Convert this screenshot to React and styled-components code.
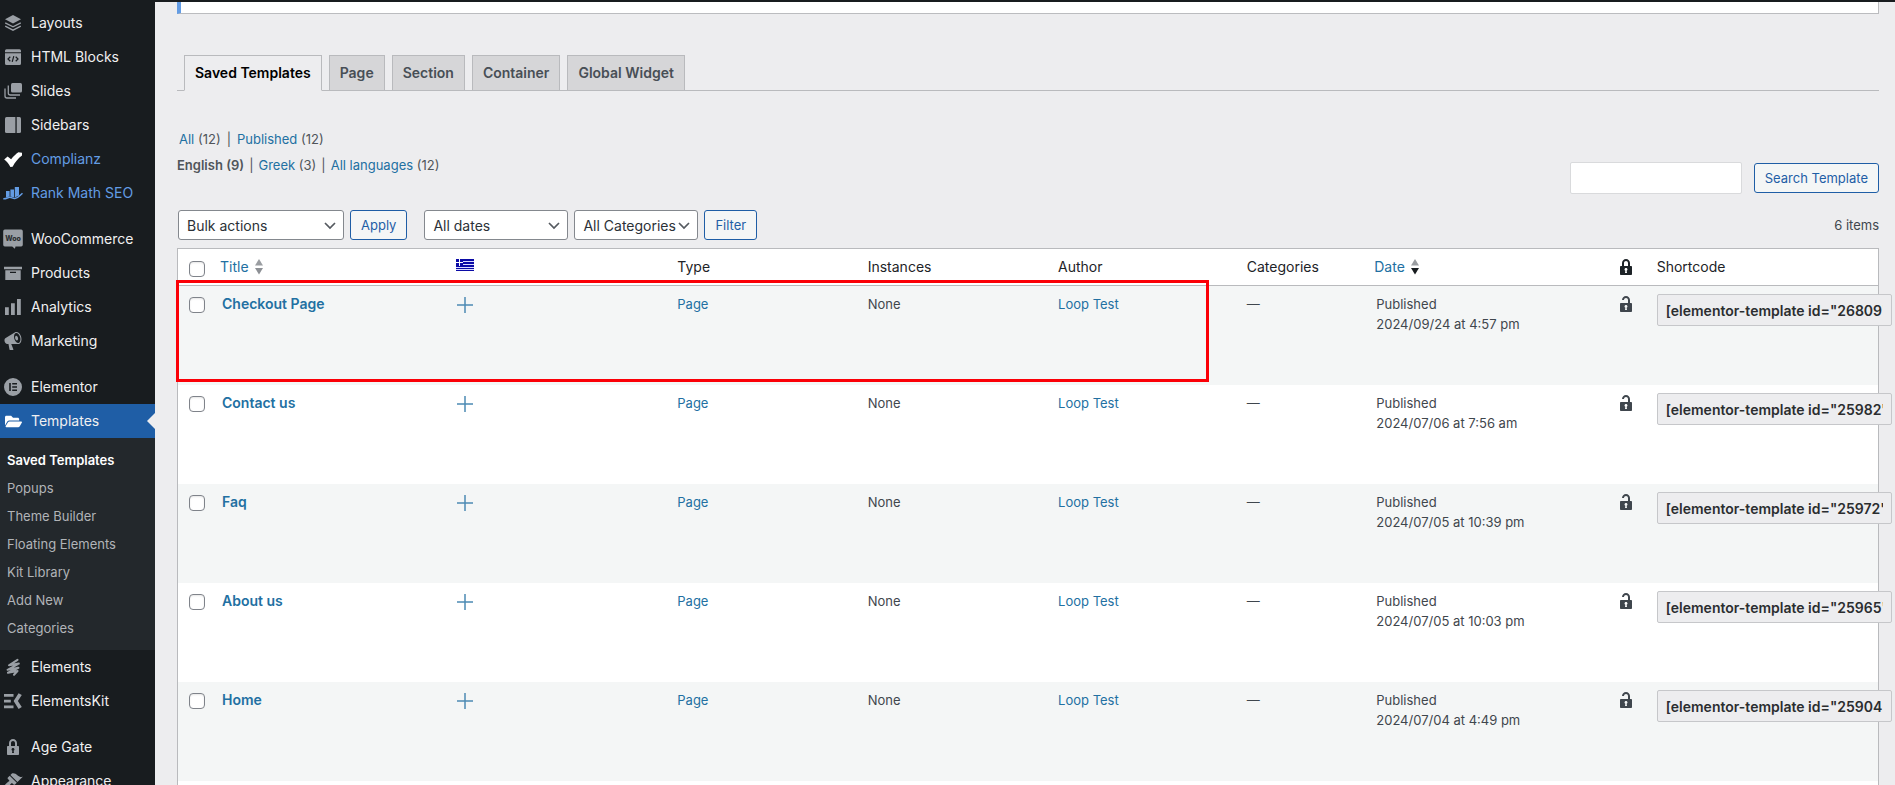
import { useState } from "react";
import styled, { createGlobalStyle } from "styled-components";
import { FaFolderOpen } from "react-icons/fa";

const LOCK_HOLE =
  "m-1 7l-.36-2.15c.51-.24.86-.75.86-1.35 0-.83-.67-1.5-1.5-1.5s-1.5.67-1.5 1.5c0 .6.35 1.11.86 1.35L9 16h2z";

const icons = {
  layouts: (
    <>
      <path d="M10 2l8 4.2-8 4.3-8-4.3z" />
      <path d="M2.2 9.8l7.8 4 7.8-4M2.2 13.2l7.8 4 7.8-4" fill="none" stroke="currentColor" strokeWidth="1.4" />
    </>
  ),
  html: (
    <>
      <path d="M3.5 2.3h13A1.5 1.5 0 0 1 18 3.8v1.4H2V3.8a1.5 1.5 0 0 1 1.5-1.5zM2 6.3h16v10.2a1.5 1.5 0 0 1-1.5 1.5h-13A1.5 1.5 0 0 1 2 16.5z" />
      <path d="M7.3 9.8L5 12l2.3 2.2M12.7 9.8L15 12l-2.3 2.2M10.8 9.2l-1.6 5.6" fill="none" stroke="#181c1f" strokeWidth="1.2" />
    </>
  ),
  slides: (
    <>
      <rect x="8" y="2" width="11" height="9.5" rx="1.5" />
      <path d="M5.3 4.5V12a2 2 0 0 0 2 2H17M2 7.5V15a2 2 0 0 0 2 2h9" fill="none" stroke="currentColor" strokeWidth="1.3" />
    </>
  ),
  sidebars: (
    <>
      <path d="M3.5 2h8.9v16H3.5A1.5 1.5 0 0 1 2 16.5v-13A1.5 1.5 0 0 1 3.5 2z" />
      <path d="M13.7 2h2.8A1.5 1.5 0 0 1 18 3.5v13a1.5 1.5 0 0 1-1.5 1.5h-2.8z" />
    </>
  ),
  complianz: <path d="M1.2 10.6L4.6 7.4l3.5 2.9C10.6 7 13 4.8 15.4 3.2L19 3.8v2.7c-4 3-6.7 6.3-9.4 11.2l-2.2.3c-1.6-3-3.6-5.4-6.2-7.4z" />,
  rankmath: (
    <>
      <path d="M3 8h3.6v5.4L3 14.5zM7.4 6.500H11v8l-3.6-1zM11.8 4H16v8.5l-4.2 2z" />
      <path d="M.3 15.8c3 .3 4.5-1.5 6.5-1.5s3 1.5 5 1.2c2.6-.3 4.5-2.3 7.7-5.3" fill="none" stroke="currentColor" strokeWidth="1.5" />
    </>
  ),
  woo: (
    <>
      <path d="M2 .5h16A1.700 1.700 0 0 1 19.8 2.2v13.6a1.7 1.7 0 0 1-1.8 1.7h-5.5l-.6 2.3-2.7-2.3H2A1.7 1.7 0 0 1 .2 15.8V2.2A1.7 1.7 0 0 1 2 .5z" />
      <text x="10" y="12" textAnchor="middle" fontSize="7" fontWeight="800" fill="#2a2e31">Woo</text>
    </>
  ),
  products: <path d="M1 3.8h18v2.4H1zM2.3 7.3h15.4V17H2.3zM7 8.8v1.3h6V8.8z" fillRule="evenodd" />,
  analytics: <path d="M2 10.3h3.8V18H2zM8 6.3h3.8V18H8zM14 2h3.8v16H14z" />,
  marketing: (
    <path d="M18.15 5.94c.46 1.62.38 3.22-.02 4.48-.42 1.28-1.26 2.18-2.3 2.48-.16.06-.26.06-.4.06-.06.02-.12.02-.18.02-.06.02-.14.02-.22.02h-6.8l2.22 5.5c.02.14-.06.26-.14.34-.08.1-.24.16-.34.16H6.95c-.1 0-.26-.06-.34-.16-.08-.08-.16-.2-.14-.34l-1-5.5H4.25l-.02-.02c-.5.06-1.08-.18-1.54-.62s-.88-1.08-1.06-1.88c-.24-.8-.2-1.56-.02-2.2.18-.62.58-1.08 1.06-1.3l.02-.02 9-5.4c.1-.06.18-.1.24-.16.06-.04.14-.08.24-.12.16-.08.28-.12.5-.18 1.04-.3 2.24.1 3.22.98s1.84 2.24 2.26 3.86zm-2.58 5.98h-.02c.4-.1.74-.34 1.04-.7.58-.7.86-1.76.86-3.04 0-.64-.1-1.3-.28-1.98-.34-1.36-1.02-2.5-1.78-3.24s-1.68-1.1-2.46-.88c-.82.22-1.4.96-1.7 2-.32 1.04-.28 2.36.06 3.72.38 1.36 1 2.5 1.8 3.24.78.74 1.62 1.1 2.48.88zm-2.54-7.08c.22-.04.42-.02.62.04.38.16.76.48 1.02 1s.42 1.2.42 1.78c0 .3-.04.56-.12.8-.18.48-.44.84-.86.94-.34.1-.8-.06-1.14-.4s-.64-.86-.78-1.5c-.18-.62-.12-1.24.02-1.72s.48-.84.82-.94z" />
  ),
  elementor: (
    <path d="M10 1a9 9 0 1 0 0 18 9 9 0 0 0 0-18zM6.2 6h1.6v8H6.2zM9.2 6h4.8v1.6H9.2zM9.2 9.2h4.8v1.6H9.2zM9.2 12.4h4.8V14H9.2z" fillRule="evenodd" />
  ),
  elements: (
    <path d="M14.5 2.8L6 8.3l9.8-1.7L4.6 12.8l10.8-2L5 15.8l9.5-1.8-3.5 3.8" fill="none" stroke="currentColor" strokeWidth="2.1" strokeLinecap="round" strokeLinejoin="round" />
  ),
  elementskit: (
    <path d="M1 3h9.5v2.7H1zM1 8.7h6.8v2.7H1zM1 14.6h9.5v2.7H1zM15.6 2.2l3.2 1.9-3.9 6 3.9 6-3.2 1.9-5-7.9z" />
  ),
  lock: (
    <path d={"M14 9h1c.55 0 1 .45 1 1v7c0 .55-.45 1-1 1H5c-.55 0-1-.45-1-1v-7c0-.55.45-1 1-1h1V6c0-2.21 1.79-4 4-4s4 1.79 4 4v3zm-2 0V6c0-1.1-.9-2-2-2s-2 .9-2 2v3h4z" + LOCK_HOLE} />
  ),
  unlock: (
    <path d={"M12 9V6c0-1.1-.9-2-2-2s-2 .9-2 2H6c0-2.21 1.79-4 4-4s4 1.79 4 4v3h1c.55 0 1 .45 1 1v7c0 .55-.45 1-1 1H5c-.55 0-1-.45-1-1v-7c0-.55.45-1 1-1h7z" + LOCK_HOLE} />
  ),
  appearance: (
    <path d="M14.48 11.06L7.41 3.99l1.5-1.5c.5-.56 2.3-.47 3.51.32 1.21.8 1.43 1.28 2.91 2.1 1.18.64 2.45 1.26 4.45.85zm-.71.71L6.7 4.7 4.93 6.47c-.39.39-.39 1.02 0 1.41l1.06 1.06c.39.39.39 1.03 0 1.42-.6.6-1.43 1.11-2.21 1.69-.35.26-.7.53-1.01.84C1.43 14.23.4 16.08 1.4 17.07c.99 1 2.84-.03 4.18-1.36.31-.31.58-.66.85-1.02.57-.78 1.08-1.61 1.69-2.21.39-.39 1.02-.39 1.41 0l1.06 1.06c.39.39 1.02.39 1.41 0z" />
  ),
};

const Icon = ({ name }) => (
  <Glyph viewBox="0 0 20 20" aria-hidden="true">
    {icons[name]}
  </Glyph>
);

const menu = [
  [
    { label: "Layouts", icon: "layouts" },
    { label: "HTML Blocks", icon: "html" },
    { label: "Slides", icon: "slides" },
    { label: "Sidebars", icon: "sidebars" },
    { label: "Complianz", icon: "complianz", color: "#639ce4", iconColor: "#ffffff" },
    { label: "Rank Math SEO", icon: "rankmath", color: "#639ce4", iconColor: "#639ce4" },
  ],
  [
    { label: "WooCommerce", icon: "woo" },
    { label: "Products", icon: "products" },
    { label: "Analytics", icon: "analytics" },
    { label: "Marketing", icon: "marketing" },
  ],
  [
    { label: "Elementor", icon: "elementor" },
    {
      label: "Templates",
      icon: "templates",
      iconColor: "#ffffff",
      children: [
        "Saved Templates",
        "Popups",
        "Theme Builder",
        "Floating Elements",
        "Kit Library",
        "Add New",
        "Categories",
      ],
    },
    { label: "Elements", icon: "elements" },
    { label: "ElementsKit", icon: "elementskit" },
  ],
  [
    { label: "Age Gate", icon: "lock" },
    { label: "Appearance", icon: "appearance" },
  ],
];

const tabs = ["Saved Templates", "Page", "Section", "Container", "Global Widget"];

const templates = [
  { id: 26809, title: "Checkout Page", date: "2024/09/24 at 4:57 pm" },
  { id: 25982, title: "Contact us", date: "2024/07/06 at 7:56 am" },
  { id: 25972, title: "Faq", date: "2024/07/05 at 10:39 pm" },
  { id: 25965, title: "About us", date: "2024/07/05 at 10:03 pm" },
  { id: 25904, title: "Home", date: "2024/07/04 at 4:49 pm" },
];

function Sidebar() {
  return (
    <SideNav>
      {menu.map((group, index) => (
        <MenuGroup key={index}>
          {group.map((item) => (
            <li key={item.label}>
              <MenuLink href="#" $color={item.color} $iconColor={item.iconColor} $active={!!item.children}>
                {item.icon === "templates" ? (
                  <FolderBox>
                    <FaFolderOpen size={17} />
                  </FolderBox>
                ) : (
                  <Icon name={item.icon} />
                )}
                {item.label}
              </MenuLink>
              {item.children && (
                <SubMenu>
                  {item.children.map((child, i) => (
                    <li key={child}>
                      <SubLink href="#" $current={i === 0}>
                        {child}
                      </SubLink>
                    </li>
                  ))}
                </SubMenu>
              )}
            </li>
          ))}
        </MenuGroup>
      ))}
    </SideNav>
  );
}

function SortArrows({ desc }) {
  return (
    <Arrows viewBox="0 0 8 16" aria-hidden="true">
      <path d="M4 0l4 6.5H0z" fill="#9a9da1" />
      <path d="M4 15.5L0 9h8z" fill={desc ? "#181c1f" : "#8d9095"} />
    </Arrows>
  );
}

function GreekFlag() {
  return (
    <Flag viewBox="0 0 18 12" role="img" aria-label="Greek">
      <rect width="18" height="12" fill="#0b0ba6" />
      <path d="M7 2h11v1H7zM7 5h11v1H7zM0 8h18v1H0zM0 10h18v1H0z" fill="#dcdcff" />
      <path d="M3 0h1v7H3zM0 3h7v1H0z" fill="#ffffff" />
    </Flag>
  );
}

function TemplateTable() {
  const [selected, setSelected] = useState([]);

  const toggle = (id) => {
    setSelected(selected.includes(id) ? selected.filter((s) => s !== id) : [...selected, id]);
  };

  const toggleAll = (e) => {
    setSelected(e.target.checked ? templates.map((t) => t.id) : []);
  };

  return (
    <TableArea>
      <Table>
        <colgroup>
          <Col $width="32px" />
          <Col $width="13.9%" />
          <Col $width="13%" />
          <Col $width="11.2%" />
          <Col $width="11.2%" />
          <Col $width="11.1%" />
          <Col $width="7.5%" />
          <Col $width="14.2%" />
          <Col $width="41px" />
          <Col />
        </colgroup>
        <thead>
          <tr>
            <HeadCell $tight>
              <Checkbox
                aria-label="Select all"
                checked={selected.length === templates.length}
                onChange={toggleAll}
              />
            </HeadCell>
            <HeadCell>
              <SortLink href="#">
                Title <SortArrows />
              </SortLink>
            </HeadCell>
            <HeadCell>
              <GreekFlag />
            </HeadCell>
            <HeadCell>Type</HeadCell>
            <HeadCell>Instances</HeadCell>
            <HeadCell>Author</HeadCell>
            <HeadCell>Categories</HeadCell>
            <HeadCell>
              <SortLink href="#">
                Date <SortArrows desc />
              </SortLink>
            </HeadCell>
            <HeadCell>
              <Icon name="lock" />
            </HeadCell>
            <HeadCell>Shortcode</HeadCell>
          </tr>
        </thead>
        <tbody>
          {templates.map((item) => (
            <Row key={item.id}>
              <Cell $tight>
                <Checkbox
                  aria-label={"Select " + item.title}
                  checked={selected.includes(item.id)}
                  onChange={() => toggle(item.id)}
                />
              </Cell>
              <SortedCell>
                <TitleLink href="#">{item.title}</TitleLink>
              </SortedCell>
              <Cell>
                <AddLink href="#" aria-label="Add translation">
                  <svg width="18" height="20" viewBox="0 0 18 20">
                    <path d="M9 3v16M1 11h16" stroke="#4c8bb4" strokeWidth="1.5" />
                  </svg>
                </AddLink>
              </Cell>
              <Cell>
                <Link href="#">Page</Link>
              </Cell>
              <Cell>None</Cell>
              <Cell>
                <Link href="#">Loop Test</Link>
              </Cell>
              <Cell>—</Cell>
              <SortedCell>
                Published
                <br />
                {item.date}
              </SortedCell>
              <Cell>
                <Icon name="unlock" />
              </Cell>
              <Cell>
                <Shortcode
                  readOnly
                  aria-label={"Shortcode for " + item.title}
                  value={`[elementor-template id="${item.id}"]`}
                />
              </Cell>
            </Row>
          ))}
          <Row>
            <Cell colSpan={10} />
          </Row>
        </tbody>
      </Table>
      <Highlight />
    </TableArea>
  );
}

function App() {
  return (
    <Page>
      <GlobalStyle />
      <Sidebar />
      <Content>
        <Notice />
        <Tabs>
          {tabs.map((tab, i) => (
            <Tab key={tab} href="#" $active={i === 0}>
              {tab}
            </Tab>
          ))}
        </Tabs>
        <Filters>
          <Views>
            <ViewLine $indent>
              <span>
                <Link href="#">All</Link> (12)
              </span>
              <span>|</span>
              <span>
                <Link href="#">Published</Link> (12)
              </span>
            </ViewLine>
            <ViewLine>
              <strong>English (9)</strong>
              <span>|</span>
              <span>
                <Link href="#">Greek</Link> (3)
              </span>
              <span>|</span>
              <span>
                <Link href="#">All languages</Link> (12)
              </span>
            </ViewLine>
          </Views>
          <SearchBox onSubmit={(e) => e.preventDefault()}>
            <SearchInput type="search" aria-label="Search Template" />
            <Button type="submit">Search Template</Button>
          </SearchBox>
        </Filters>
        <TableNav>
          <Select $width="166px" aria-label="Bulk actions">
            <option>Bulk actions</option>
          </Select>
          <Button type="button">Apply</Button>
          <Spacer />
          <Select $width="144px" aria-label="Filter by date">
            <option>All dates</option>
          </Select>
          <Select $width="124px" aria-label="Filter by category">
            <option>All Categories</option>
          </Select>
          <Button type="button">Filter</Button>
          <Count>6 items</Count>
        </TableNav>
        <TemplateTable />
      </Content>
    </Page>
  );
}

export default App;

const GlobalStyle = createGlobalStyle`
  * {
    box-sizing: border-box;
  }
  body {
    margin: 0;
    background: #ededef;
    color: #3f464d;
    font-family: Inter, "Liberation Sans", sans-serif;
    font-size: 13px;
    line-height: 20px;
  }
  button, input, select {
    font-family: inherit;
  }
`;

const Page = styled.div`
  display: flex;
  height: 100vh;
  overflow-x: hidden;
  overflow-y: auto;
  scrollbar-width: none;
  border-top: 2px solid #181c1f;
`;

const SideNav = styled.nav`
  flex: 0 0 155px;
  align-self: flex-start;
  min-height: 100%;
  padding-top: 4px;
  background: #181c1f;
`;

const MenuGroup = styled.ul`
  margin: 0 0 12px;
  padding: 0;
  list-style: none;
`;

const Glyph = styled.svg`
  display: block;
  flex: none;
  width: 20px;
  height: 20px;
  fill: currentColor;
`;

const FolderBox = styled.span`
  display: flex;
  justify-content: center;
  width: 20px;
`;

const MenuLink = styled.a`
  position: relative;
  display: flex;
  align-items: center;
  gap: 8px;
  height: 34px;
  padding-left: 3px;
  background: ${(props) => (props.$active ? "#1f5ea6" : "transparent")};
  color: ${(props) => props.$color || "#f0f0f1"};
  font-size: 14px;
  text-decoration: none;
  white-space: nowrap;
  svg {
    color: ${(props) => props.$iconColor || "#9a9fa5"};
  }
  &::after {
    content: "";
    display: ${(props) => (props.$active ? "block" : "none")};
    position: absolute;
    right: 0;
    top: 9px;
    border: 8px solid transparent;
    border-left-width: 0;
    border-right-color: #ededef;
  }
`;

const SubMenu = styled.ul`
  margin: 0;
  padding: 8px 0;
  list-style: none;
  background: #23282c;
`;

const SubLink = styled.a`
  display: block;
  padding-left: 7px;
  color: ${(props) => (props.$current ? "#ffffff" : "#b1b4b8")};
  font-size: 13px;
  font-weight: ${(props) => (props.$current ? 600 : 400)};
  line-height: 28px;
  text-decoration: none;
`;

const Content = styled.main`
  flex: 1;
  min-width: 0;
  padding: 0 16px 0 22px;
`;

const Notice = styled.div`
  height: 12px;
  background: #ffffff;
  border: 1px solid #bbbcbf;
  border-top: 0;
  border-left: 4px solid #639ce4;
`;

const Tabs = styled.nav`
  display: flex;
  gap: 7px;
  margin-top: 41px;
  padding-left: 7px;
  border-bottom: 1px solid #b9babd;
`;

const Tab = styled.a`
  margin-bottom: -1px;
  padding: 5px 10px;
  border: 1px solid #b9babd;
  border-bottom-color: ${(props) => (props.$active ? "#ededef" : "#b9babd")};
  background: ${(props) => (props.$active ? "#ededef" : "#d6d6d8")};
  color: ${(props) => (props.$active ? "#000000" : "#484f56")};
  font-size: 14px;
  font-weight: 600;
  line-height: 24px;
  text-decoration: none;
  white-space: nowrap;
`;

const Link = styled.a`
  color: #2270a2;
  text-decoration: none;
`;

const Filters = styled.div`
  display: flex;
  justify-content: space-between;
  align-items: flex-end;
  padding-top: 38px;
`;

const Views = styled.div`
  display: flex;
  flex-direction: column;
  gap: 6px;
  padding-bottom: 19px;
`;

const ViewLine = styled.div`
  display: flex;
  gap: ${(props) => (props.$indent ? "6px" : "5px")};
  padding-left: ${(props) => (props.$indent ? "2px" : "0")};
  color: #50555a;
  strong {
    font-weight: 600;
  }
`;

const SearchBox = styled.form`
  display: flex;
  align-items: center;
  gap: 12px;
`;

const SearchInput = styled.input`
  width: 172px;
  height: 32px;
  padding: 0 8px;
  border: 1px solid #d9dadc;
  border-radius: 2px;
  background: #ffffff;
  font-size: 14px;
`;

const Button = styled.button`
  height: 30px;
  padding: 0 10px;
  border: 1px solid #1f5ea6;
  border-radius: 3px;
  background: #f4f6f6;
  color: #1f5ea6;
  font-size: 13px;
  white-space: nowrap;
  cursor: pointer;
`;

const TableNav = styled.div`
  display: flex;
  align-items: center;
  gap: 6px;
  margin: 16px 0 8px;
  padding-left: 1px;
`;

const Select = styled.select`
  width: ${(props) => props.$width};
  height: 30px;
  padding: 0 16px 0 8px;
  appearance: none;
  border: 1px solid #84888e;
  border-radius: 3px;
  background: #ffffff
    url("data:image/svg+xml,%3Csvg xmlns='http://www.w3.org/2000/svg' width='20' height='20'%3E%3Cpath d='M5 7l5 5 5-5' fill='none' stroke='%23555a60' stroke-width='1.7'/%3E%3C/svg%3E")
    no-repeat right 3px top 5px;
  color: #2b3137;
  font-size: 14px;
`;

const Spacer = styled.span`
  width: 5px;
`;

const Count = styled.span`
  margin-left: auto;
`;

const TableArea = styled.div`
  position: relative;
`;

const Table = styled.table`
  width: 100%;
  table-layout: fixed;
  border: 1px solid #b9babd;
  border-spacing: 0;
  background: #ffffff;
`;

const Col = styled.col`
  width: ${(props) => props.$width || "auto"};
`;

const HeadCell = styled.th`
  height: 37px;
  padding: 0 ${(props) => (props.$tight ? "0" : "10px")} 0 ${(props) => (props.$tight ? "11px" : "10px")};
  border-bottom: 1px solid #b9babd;
  color: #1d2327;
  font-size: 14px;
  font-weight: 400;
  text-align: left;
`;

const Row = styled.tr`
  height: 99px;
  &:nth-child(odd) {
    background: #f4f6f6;
  }
`;

const Cell = styled.td`
  padding: 8px ${(props) => (props.$tight ? "0" : "10px")} 8px ${(props) => (props.$tight ? "11px" : "10px")};
  vertical-align: top;
  white-space: nowrap;
`;

const SortedCell = styled(Cell)`
  padding-left: 12px;
`;

const Checkbox = styled.input.attrs({ type: "checkbox" })`
  display: block;
  width: 16px;
  height: 16px;
  margin: 3px 0 0;
  appearance: none;
  border: 1px solid #7f838a;
  border-radius: 4px;
  background: #ffffff;
  box-shadow: inset 0 1px 2px rgba(0, 0, 0, 0.1);
  &:checked {
    background: #1f5ea6;
  }
`;

const SortLink = styled(Link)`
  display: flex;
  align-items: center;
  gap: 6px;
`;

const Arrows = styled.svg`
  width: 8px;
  height: 16px;
`;

const Flag = styled.svg`
  display: block;
  width: 18px;
  height: 12px;
  margin-bottom: 4px;
`;

const TitleLink = styled(Link)`
  font-size: 14px;
  font-weight: 600;
`;

const AddLink = styled.a`
  display: block;
  svg {
    display: block;
  }
`;

const Shortcode = styled.input`
  display: block;
  width: 235px;
  height: 32px;
  padding: 0 8px;
  border: 1px solid #c6c7ca;
  border-radius: 2px;
  background: #ededef;
  color: #2b2d30;
  font-size: 14px;
  font-weight: 600;
`;

/* red frame drawn over the first row */
const Highlight = styled.div`
  position: absolute;
  top: 32px;
  left: -1px;
  width: 60.7%;
  height: 102px;
  border: 3px solid #fb0007;
  pointer-events: none;
`;
